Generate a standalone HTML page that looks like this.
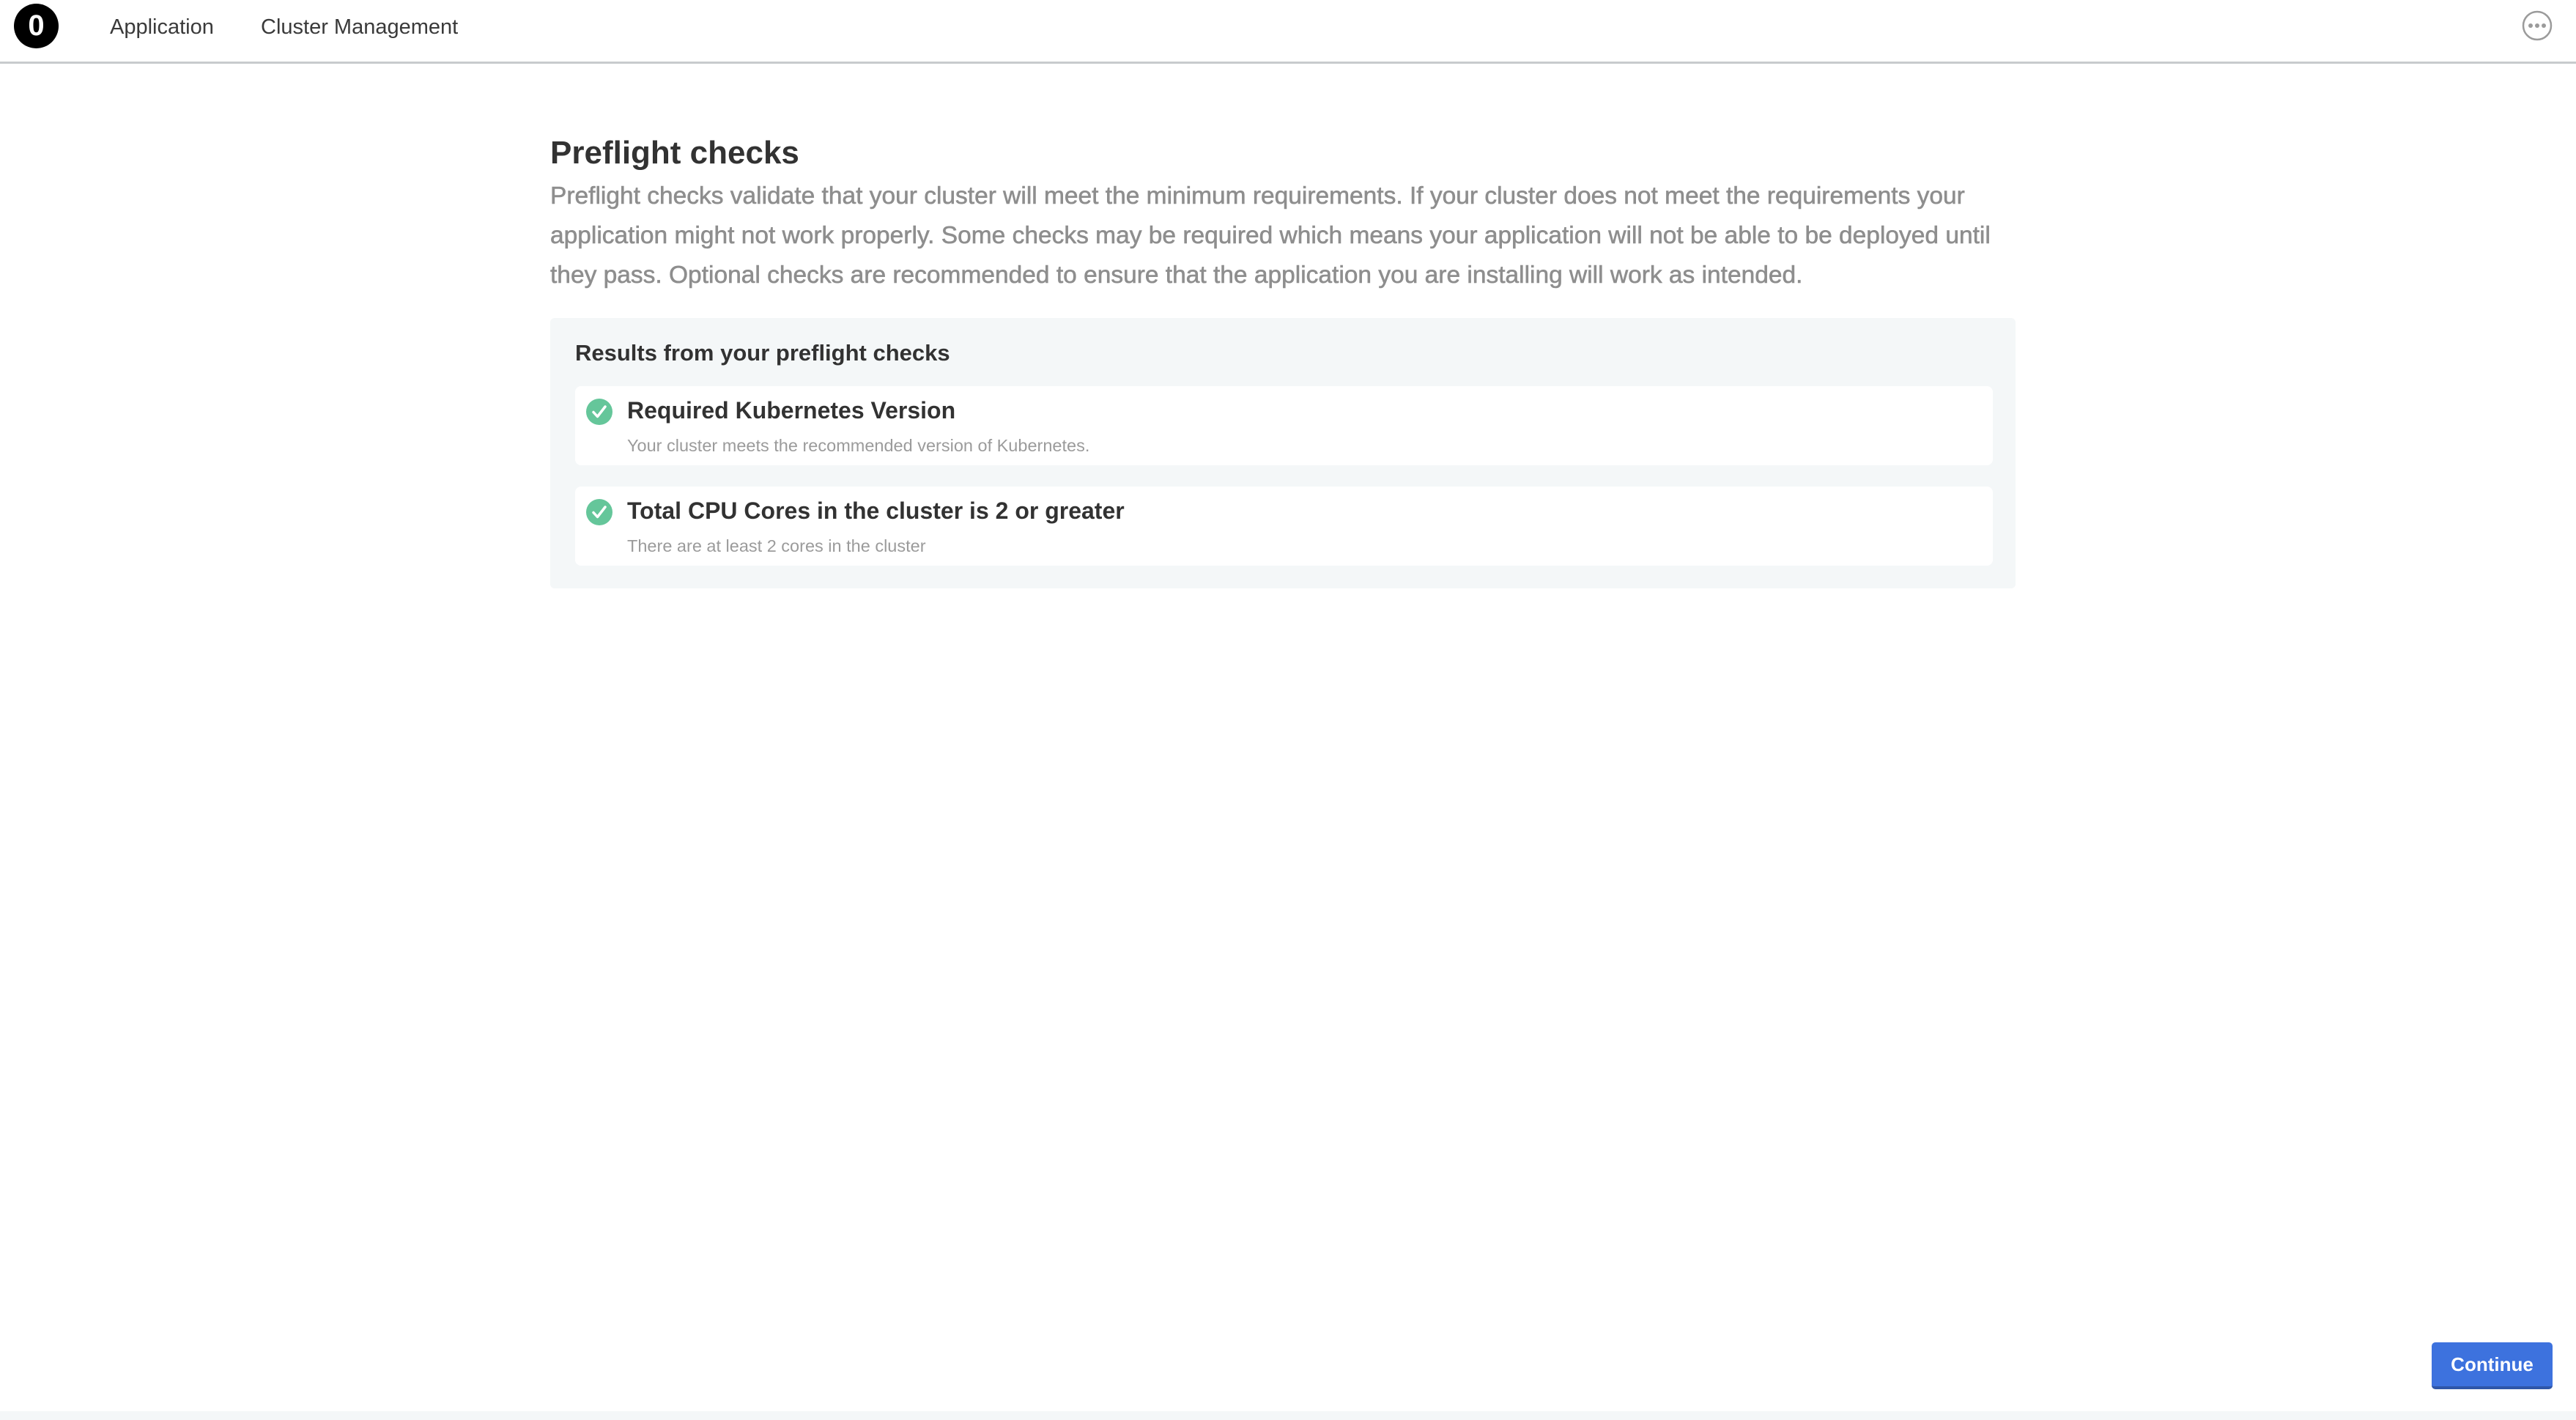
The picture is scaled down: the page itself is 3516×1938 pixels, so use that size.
<!DOCTYPE html>
<html><head><meta charset="utf-8"><style>
*{margin:0;padding:0;box-sizing:border-box}
body{width:3516px;height:1938px;background:#fff;font-family:"Liberation Sans",Arial,sans-serif;position:relative;overflow:hidden;color:#323232}
.hdr{position:absolute;left:0;top:0;width:3516px;height:87px;border-bottom:3px solid #c8cbcd}
.abs{position:absolute;white-space:nowrap}
.nav{font-size:29px;color:#3a3a3a;top:21px}
.box{position:absolute;left:751px;top:434px;width:2000px;height:369px;background:#f4f7f8;border-radius:6px}
.card{position:absolute;left:34px;width:1935px;height:108px;background:#fff;border-radius:8px}
.ct{position:absolute;font-size:32px;font-weight:bold;color:#323232;white-space:nowrap}
.cs{position:absolute;font-size:23.5px;color:#9b9b9b;white-space:nowrap}
</style></head><body>
<div class="hdr"></div>
<div class="abs" style="left:19px;top:5px;width:61px;height:61px;border-radius:50%;background:#000;color:#fff;font-weight:bold;font-size:40px;text-align:center;line-height:61px">0</div>
<div class="abs nav" style="left:150px">Application</div>
<div class="abs nav" style="left:356px">Cluster Management</div>
<svg class="abs" style="left:3442px;top:14px" width="42" height="42" viewBox="0 0 42 42"><circle cx="21" cy="21" r="19" fill="none" stroke="#9b9b9b" stroke-width="2.5"/><circle cx="12" cy="21" r="3" fill="#9b9b9b"/><circle cx="21" cy="21" r="3" fill="#9b9b9b"/><circle cx="30" cy="21" r="3" fill="#9b9b9b"/></svg>
<div class="abs" style="left:751px;top:184px;font-size:44px;font-weight:bold;color:#323232">Preflight checks</div>
<div class="abs" style="left:751px;top:241px;width:1990px;white-space:normal;font-size:33.5px;line-height:54px;color:#8e8e8e;-webkit-text-stroke:0.6px #8e8e8e">Preflight checks validate that your cluster will meet the minimum requirements. If your cluster does not meet the requirements your application might not work properly. Some checks may be required which means your application will not be able to be deployed until they pass. Optional checks are recommended to ensure that the application you are installing will work as intended.</div>
<div class="box">
<div class="abs" style="left:34px;top:30px;font-size:31px;font-weight:bold;color:#323232">Results from your preflight checks</div>
<div class="card" style="top:93px">
<svg style="position:absolute;left:14px;top:16px" width="38" height="38" viewBox="0 0 38 38"><circle cx="19" cy="19" r="18" fill="#65c69a"/><path d="M11 19.5l5.5 6L27 12" fill="none" stroke="#fff" stroke-width="3.5" stroke-linecap="round" stroke-linejoin="round"/></svg>
<div class="ct" style="left:71px;top:15px">Required Kubernetes Version</div>
<div class="cs" style="left:71px;top:68px">Your cluster meets the recommended version of Kubernetes.</div>
</div>
<div class="card" style="top:230px">
<svg style="position:absolute;left:14px;top:16px" width="38" height="38" viewBox="0 0 38 38"><circle cx="19" cy="19" r="18" fill="#65c69a"/><path d="M11 19.5l5.5 6L27 12" fill="none" stroke="#fff" stroke-width="3.5" stroke-linecap="round" stroke-linejoin="round"/></svg>
<div class="ct" style="left:71px;top:15px">Total CPU Cores in the cluster is 2 or greater</div>
<div class="cs" style="left:71px;top:68px">There are at least 2 cores in the cluster</div>
</div>
</div>
<div class="abs" style="left:3319px;top:1832px;width:165px;height:64px;background:#3d72de;border-radius:5px;border-bottom:4px solid #2f56a8;color:#fff;font-weight:bold;font-size:26px;text-align:center;line-height:60px">Continue</div>
<div class="abs" style="left:0;top:1926px;width:3516px;height:12px;background:#f4f7f8"></div>
</body></html>
